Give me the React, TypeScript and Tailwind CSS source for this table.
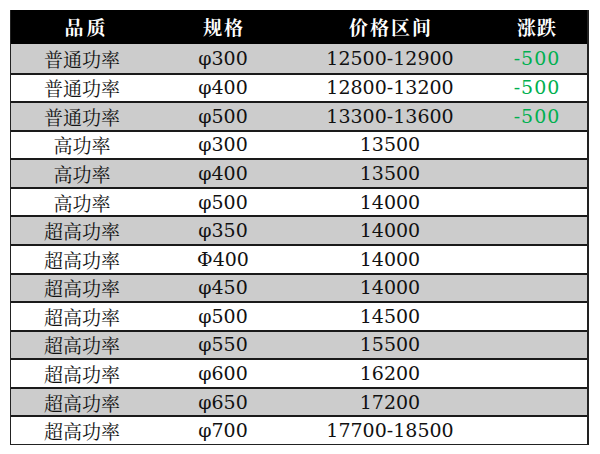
const rows: [string, string, string, string][] = [
  ["普通功率", "φ300", "12500-12900", "-500"],
  ["普通功率", "φ400", "12800-13200", "-500"],
  ["普通功率", "φ500", "13300-13600", "-500"],
  ["高功率", "φ300", "13500", ""],
  ["高功率", "φ400", "13500", ""],
  ["高功率", "φ500", "14000", ""],
  ["超高功率", "φ350", "14000", ""],
  ["超高功率", "Φ400", "14000", ""],
  ["超高功率", "φ450", "14000", ""],
  ["超高功率", "φ500", "14500", ""],
  ["超高功率", "φ550", "15500", ""],
  ["超高功率", "φ600", "16200", ""],
  ["超高功率", "φ650", "17200", ""],
  ["超高功率", "φ700", "17700-18500", ""],
];

const cols = "grid grid-cols-[142px_140px_194px_100px] items-center";

export default function App() {
  return (
    <div className="w-[600px] h-[454px] bg-white pt-[10px] pl-[10px]">
      <div className="w-[579px] border-l border-r-2 border-b border-[#222]">
        <div className={`${cols} h-[34px] bg-black text-white font-bold text-[19px] pt-[1px] [font-family:'Noto_Serif_CJK_SC',serif]`}>
          <div className="text-center tracking-[3px] pl-[9px]">品质</div>
          <div className="text-center tracking-[2px] pl-[2px]">规格</div>
          <div className="text-center tracking-[2px] pl-[2px]">价格区间</div>
          <div className="text-center tracking-[1px]">涨跌</div>
        </div>
        {rows.map((r, i) => (
          <div
            key={i}
            className={`${cols} h-[28.57px] text-[19px] leading-none text-[#111] [font-family:'DejaVu_Serif','Noto_Serif_CJK_SC',serif] ${i > 0 ? "border-t-2 border-[#1a1a1a]" : ""} ${i % 2 === 0 ? "bg-[#cccccc]" : "bg-white"}`}
          >
            <div className="text-center [font-family:'Noto_Serif_CJK_SC',serif]">{r[0]}</div>
            <div className="text-center">{r[1]}</div>
            <div className="text-center">{r[2]}</div>
            <div className="text-center text-[#00b050] tracking-[1px]">{r[3]}</div>
          </div>
        ))}
      </div>
    </div>
  );
}
